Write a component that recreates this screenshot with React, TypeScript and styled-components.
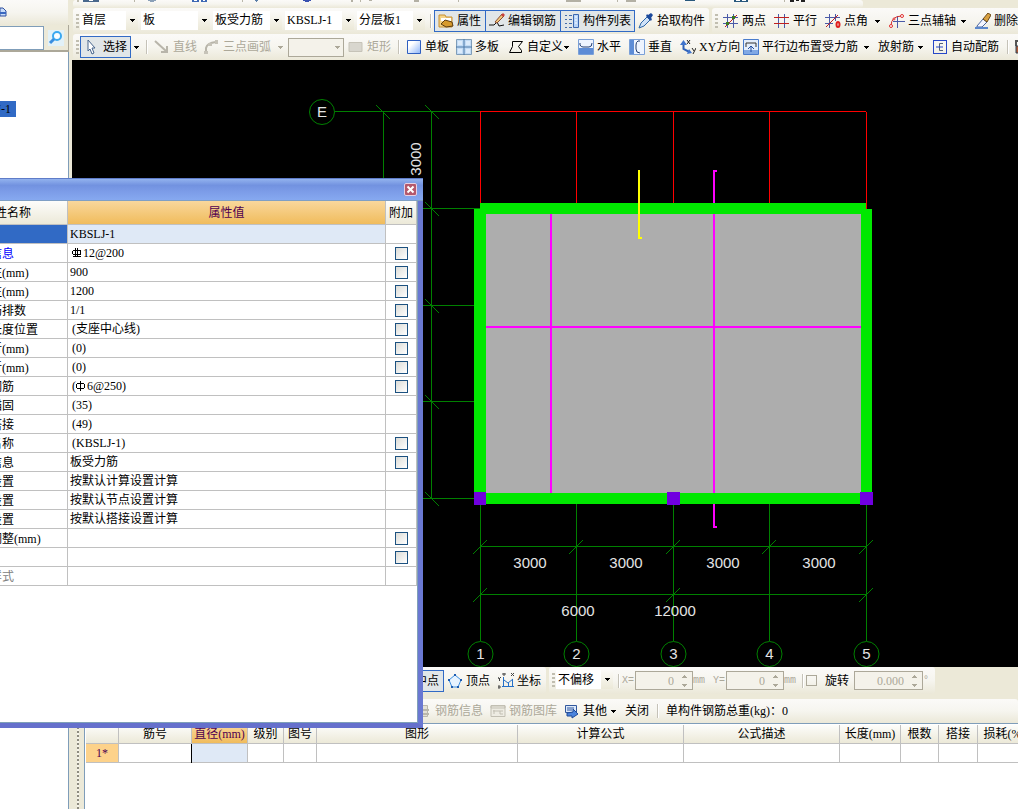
import React from "react";
import styled, { createGlobalStyle, css } from "styled-components";

const GlobalStyle = createGlobalStyle`
  * { box-sizing: border-box; }
  body { margin: 0; overflow: hidden; background: #ece9d8; }
  body, button, input, select, table {
    font-family: "Liberation Serif", "Noto Sans CJK SC", serif;
    font-size: 12px;
    line-height: 16px;
    color: #000;
  }
`;

const line = "#c0c0c0";
const blueLine = "#7f9db9";
const barFill = "linear-gradient(#fbfaf8, #f6f5ef 50%, #ebe8d8)";

/* ---------- frame ---------- */

const Window = styled.div`
  display: flex;
  min-height: 100vh;
  position: relative;
  overflow: hidden;
`;

const Sidebar = styled.aside`
  flex: none;
  width: 69px;
  display: flex;
  flex-direction: column;
`;

const SideTools = styled.div`
  height: 25px;
  margin-right: 1px;
  background: ${barFill};
  display: flex;
  align-items: center;
`;

const SearchRow = styled.div`
  display: flex;
  height: 27px;
  padding-top: 1px;
  border-bottom: 2px solid #aca899;
  border-right: 1px solid #aca899;
`;

const SearchInput = styled.input`
  width: 44px;
  height: 24px;
  border: 1px solid ${blueLine};
  border-left: 0;
  background: #fff;
`;

const SearchButton = styled.button`
  flex: 1;
  border: 0;
  padding: 0 0 0 4px;
  background: #ece9d8;
  display: flex;
  align-items: center;
  svg { background: #e2f1f8; }
`;

const Tree = styled.div`
  flex: 1;
  background: #fff;
  border-right: 1px solid ${blueLine};
  padding-top: 49px;
`;

const TreeItem = styled.div`
  width: 16px;
  height: 16px;
  overflow: hidden;
  display: flex;
  justify-content: flex-end;
  padding-right: 5px;
  white-space: nowrap;
  background: #316ac5;
`;

const Main = styled.main`
  flex: 1;
  min-width: 0;
  display: flex;
  flex-direction: column;
`;

const Workspace = styled.section`
  flex: 1;
  display: flex;
  flex-direction: column;
  padding-left: 3px;
`;

const Canvas = styled.div`
  flex: 1;
  background: #000;
  overflow: hidden;
  display: flex;
  svg { display: block; flex: none; }
`;

/* ---------- toolbars ---------- */

const ToolRow = styled.div<{ $h?: number; $bottom?: number }>`
  display: flex;
  gap: 3px;
  height: ${(p) => p.$h ?? 26}px;
  padding-bottom: ${(p) => p.$bottom ?? 0}px;
  padding-left: 1px;
  overflow: hidden;
`;

const Bar = styled.div<{ $grow?: boolean; $lead?: number }>`
  flex: ${(p) => (p.$grow ? "1 0 auto" : "none")};
  display: flex;
  align-items: center;
  padding-left: ${(p) => p.$lead ?? 0}px;
  background: ${barFill};
  border-radius: 3px;
`;

const Grip = styled.span`
  flex: none;
  width: 3px;
  height: 15px;
  margin: 0 1px 0 3px;
  background: repeating-linear-gradient(#c1beb0 0 2px, transparent 2px 4px);
`;

const Separator = styled.span`
  flex: none;
  width: 2px;
  height: 14px;
  margin: 0 2px;
  background: linear-gradient(90deg, #c5c2b8 50%, #fff 50%);
`;

const Tool = styled.button<{ $w: number; $on?: boolean }>`
  flex: none;
  width: ${(p) => p.$w}px;
  height: 22px;
  display: flex;
  align-items: center;
  gap: 3px;
  padding: 0 3px;
  border: 1px solid transparent;
  background: none;
  white-space: nowrap;
  svg { flex: none; }
  &:disabled { color: #aca899; }
  ${(p) =>
    p.$on &&
    css`
      border-color: #316ac5;
      background: #e1e6e8;
      & + & { margin-left: -1px; }
    `}
`;

const CaretButton = styled.button`
  flex: none;
  width: 13px;
  height: 22px;
  display: flex;
  align-items: center;
  padding: 0 0 0 3px;
  border: 0;
  background: none;
  color: #000;
  &:disabled { color: #aca899; }
`;

const Pick = styled.span<{ $w: number; $off?: boolean }>`
  flex: none;
  display: grid;
  grid-template-columns: 1fr 12px;
  width: ${(p) => p.$w}px;
  height: 19px;
  margin: ${(p) => (p.$off ? "0" : "0 3px 2px 0")};
  background: ${(p) => (p.$off ? "#f4f2ea" : "#fff")};
  border: ${(p) => (p.$off ? "1px solid #aca899" : "0")};
  color: ${(p) => (p.$off ? "#aca899" : "#000")};
  > select {
    grid-area: 1 / 1 / 2 / 3;
    appearance: none;
    border: 0;
    padding: 0 0 0 2px;
    background: none;
    width: 100%;
  }
  > span {
    grid-area: 1 / 2 / 2 / 3;
    pointer-events: none;
    display: flex;
    align-items: center;
    justify-content: center;
    background: ${(p) => (p.$off ? "none" : "linear-gradient(#fbfaf7, #ece9d8)")};
  }
`;

const Caret = ({ up }: { up?: boolean }) => (
  <svg width="5" height="3" viewBox="0 0 5 3" shapeRendering="crispEdges">
    <path d={up ? "M2 0h1v1h1v1h1v1H0V2h1V1h1z" : "M0 0h5v1H4v1H3v1H2V2H1V1H0z"} fill="currentColor" />
  </svg>
);

const Drop = ({ value, w, label, off }: { value: string; w: number; label: string; off?: boolean }) => (
  <Pick $w={w} $off={off}>
    <select aria-label={label} disabled={off} defaultValue={value}>
      <option>{value}</option>
    </select>
    <span><Caret /></span>
  </Pick>
);

const Field = styled.label<{ $pad?: number }>`
  flex: none;
  display: flex;
  align-items: center;
  color: #aca899;
  gap: 1px;
  padding-left: ${(p) => p.$pad ?? 0}px;
`;

const Label = styled.span<{ $w?: number }>`
  flex: none;
  width: ${(p) => p.$w ?? 13}px;
  white-space: nowrap;
  color: #000;
`;

const Unit = styled.span<{ $w?: number }>`
  flex: none;
  width: ${(p) => p.$w ?? 12}px;
  font-family: "Liberation Mono", monospace;
  font-size: 10px;
  white-space: nowrap;
  color: #aca899;
`;

const NumberBox = styled.span<{ $w: number }>`
  flex: none;
  display: flex;
  align-items: center;
  width: ${(p) => p.$w}px;
  height: 19px;
  border: 1px solid #aca899;
  background: #f4f2ea;
  color: #aca899;
  input {
    flex: 1;
    min-width: 0;
    border: 0;
    padding: 0 8px 0 0;
    background: none;
    text-align: right;
    color: #aca899;
  }
`;

const Arrows = styled.span`
  flex: none;
  width: 10px;
  display: flex;
  flex-direction: column;
  gap: 6px;
`;

const Spin = ({ value, w, label }: { value: string; w: number; label: string }) => (
  <NumberBox $w={w}>
    <input aria-label={label} defaultValue={value} disabled />
    <Arrows><Caret up /><Caret /></Arrows>
  </NumberBox>
);

const TurnCheck = styled.input`
  appearance: none;
  width: 11px;
  height: 11px;
  margin: 0 7px 0 0;
  border: 1px solid #aca899;
`;

/* ---------- icons ---------- */

const glyphs: Record<string, React.ReactNode> = {
  pointer: <path d="M4 1l7 8H8l2 5-2 1-2-5-2 2z" fill="#fff" stroke="#46648c" />,
  line: <path d="M1 2l11 10M13 7v6H7" fill="none" stroke="#b8b5aa" strokeWidth="2" />,
  arc: <><path d="M2 14V9Q3 4 12 3" fill="none" stroke="#b8b5aa" strokeWidth="2" /><path d="M0 12h4v3H0zM4 4h4v3H4zM11 1h3v4h-3z" fill="#c6c3b8" /></>,
  rect: <path d="M1 3.5h13v9H1z" fill="#d8d6ce" stroke="#c6c3b8" />,
  slab: <path d="M1.500 1.500h13v13h-13z" fill="url(#slabFill)" stroke="#2f5fc0" />,
  slabs: <><path d="M.5.5h15v15H.5z" fill="#c2dbf5" stroke="#7f9db9" /><path d="M8 0v16M0 8h16" stroke="#4a78a8" /><path d="M2 2h4v4H2zM10 2h4v4h-4zM2 10h4v4H2zM10 10h4v4h-4z" fill="#dcebfb" /></>,
  poly: <path d="M4.500 2.500h10l-4 5 3 4M1.500 13.500h12v-2M1.500 13.500l3-6v-5" fill="none" stroke="#000" />,
  horiz: <><path d="M.5.5h15v15H.5z" fill="#eef4ff" stroke="#7aa0d8" /><path d="M1 9h14v6H1z" fill="#5d8cd6" /><path d="M2 4v2q1 2 3 2h6q3 0 3-4" fill="none" stroke="#223d70" /></>,
  vert: <><path d="M.5.5h15v15H.5z" fill="#eef4ff" stroke="#7aa0d8" /><path d="M1 1h4v14H1z" fill="#5d8cd6" /><path d="M11 2H9Q7 3 7 6v4q0 4 4 4" fill="none" stroke="#223d70" /></>,
  xy: <><path d="M3.500 4v6l6 3" fill="none" stroke="#2f62b8" strokeWidth="2" /><path d="M3.500 1L7 6H0zM12 14l-5 1 2-5z" fill="#3f74cc" /><path d="M7 1l3 4M10 1L7 5M12 9l2 3M16 9l-3 6" fill="none" stroke="#222" /></>,
  edge: <><path d="M.5.5h15v15H.5z" fill="#e4eefc" stroke="#4a7ccc" /><path d="M1 11h14v4H1z" fill="#80a8e4" /><path d="M3 8V4h10v4" fill="none" stroke="#333" /><path d="M8 7v6M5 10l3-3 3 3" fill="none" stroke="#234ea0" /></>,
  auto: <><path d="M1 1.500h14M1 14.500h14M1.500 1v14M14.500 1v14" stroke="#2747c8" /><path d="M11 4.500H7.500v7H11" stroke="#53627a" fill="none" /><path d="M4 8h7" stroke="#2747c8" /></>,
  attr: <><path d="M1 2h6l1 2h6v10H1z" fill="#f4d488" stroke="#c89030" /><path d="M3 5h10v3H3z" fill="#fff" /><path d="M3 11l4-4 7 2 1 4-7 1z" fill="#d69a2c" stroke="#5b3c12" /></>,
  edit: <><path d="M0 12h5l3-3 2 4 5-1" fill="none" stroke="#111" /><path d="M6 9l7-8 2 2-7 7z" fill="#eec87c" stroke="#8b4a30" /><path d="M12 2l2-2 2 2-2 2z" fill="#c8403a" /></>,
  list: <><path d="M9.500 1.500h5v13h-5z" fill="#b9d5f8" stroke="#3c68b0" /><path d="M11 4h2M11 7h2M11 10h2" stroke="#fff" /><path d="M1 2.500h2M5 2.500h3M1 6.500h2M5 6.500h3M1 10.500h2M5 10.500h3M1 14.500h2M5 14.500h3" stroke="#446caa" /></>,
  dropper: <><path d="M1 15l2-5 6-6 3 3-6 6z" fill="#cfe2f8" stroke="#2c66a8" /><path d="M8 3l5 5 1-2-1-1 2-3-2-2-3 2-1-1z" fill="#1d4a9c" /></>,
  twoPoint: <><path d="M4.500 1v14M10.500 1v14M0 4.500h15M0 10.500h15" stroke="#4a5aa8" /><path d="M2 14L14 2" stroke="#c02020" /><path d="M3 9h3v3H3zM9 3h3v3H9z" fill="#3a7a20" /></>,
  parallel: <><path d="M4.500 1v14M10.500 1v14" stroke="#4a5aa8" /><path d="M0 4.500h15M0 10.500h15" stroke="#c02020" /></>,
  angle: <><path d="M4.500 1v14M10.500 1v7M0 4.500h15M0 10.500h8" stroke="#4a5aa8" /><path d="M1 14L13 2" stroke="#c02020" /><ellipse cx="13" cy="11.500" rx="1.500" ry="2.500" fill="none" stroke="#e02020" strokeWidth="2" /></>,
  arcAxis: <><path d="M8.500 3v12M4 8.500h12" stroke="#4a5aa8" /><path d="M2 13Q2 3 13 3" fill="none" stroke="#d03030" /><circle cx="2" cy="13" r="1.500" fill="#fff" stroke="#e03030" /><circle cx="5" cy="6" r="1" fill="#fff" stroke="#e03030" /><circle cx="13" cy="3" r="1.500" fill="#fff" stroke="#e03030" /></>,
  erase: <><path d="M2 13l6-7 4 3-5 5H2z" fill="#f4f6ff" stroke="#4a66a0" /><path d="M8 6l5-6 3 2-4 7z" fill="#d8a040" stroke="#6b4a18" /><path d="M0 14h13v2H0z" fill="#5c88cc" /></>,
  mid: <path d="M2 8h12M8 2v12" stroke="#2a6ab8" />,
  vertex: <><path d="M8 2l6 5-3 7H5L2 7z" fill="#e6f3ff" stroke="#3d8ee0" /><path d="M7 1h2v2H7zM1 6h2v2H1zM13 6h2v2h-2zM4 13h2v2H4zM10 13h2v2h-2z" fill="#1c5bb0" /></>,
  coord: <><path d="M5.500 4v10M4 13.500h12M6 7l4 3 5-4M10.500 10v4M14.500 6v8" fill="none" stroke="#2470c8" /><path d="M0 4l1 2 2-2M1.500 6v2M5 0h2v2H5zM13 0l3 3M16 0l-3 3M0 13h2v2H0z" fill="none" stroke="#444" /></>,
  info: <><path d="M2.500 2.500h9v11h-9z" fill="#e4e1d6" stroke="#bab7ab" /><path d="M5 6h8v2H5zM5 10h8v2H5z" fill="#bab7ab" /></>,
  library: <><path d="M1 2.500h14v11H1z" fill="#eeece3" stroke="#c2bfb3" /><path d="M1 3h14v2H1zM3 8h10M4 7v4M10 8v3h3" fill="none" stroke="#c2bfb3" /></>,
  other: <><path d="M1.500 2.500h11v7h-11z" fill="#dce9fb" stroke="#31579c" /><path d="M3 5h7M3 7h5" stroke="#31579c" /><path d="M3 10v3h5v2l6-4-5-5v3z" fill="#4b84dc" stroke="#1f4a98" /></>,
  find: <><circle cx="9" cy="6" r="4" fill="#fafdff" stroke="#3aa8f0" strokeWidth="2" /><path d="M6 9l-4 4" stroke="#3a8ee0" strokeWidth="3" /></>,
  print: <><path d="M0 3h3l3 3v5H0z" fill="#c8dcf8" stroke="#3050a0" /><path d="M0 7h6v2H0z" fill="#3a68c0" /></>,
  calc: <><path d="M1 7V2h9v3" fill="none" stroke="#555" strokeWidth="2" /><path d="M1 7h8v7H1z" fill="#b05a38" stroke="#345" /><path d="M3 9h2v2H3zM6 11h2v2H6z" fill="#68b8e8" /></>,
};

const Icon = ({ name }: { name: string }) => (
  <svg width="16" height="16" viewBox="0 0 16 16" aria-hidden="true">{glyphs[name]}</svg>
);

type ToolProps = { icon?: string; text: string; w: number; on?: boolean; off?: boolean };
const T = ({ icon, text, w, on, off }: ToolProps) => (
  <Tool $w={w} $on={on} disabled={off}>
    {icon && <Icon name={icon} />}
    {text}
  </Tool>
);

const More = ({ off }: { off?: boolean }) => (
  <CaretButton aria-label="more" disabled={off}><Caret /></CaretButton>
);

/* Lower edge of the icon strip that scrolls out of the window's top. */
const StripEdge = () => (
  <svg width="790" height="8" viewBox="73 0 790 8" shapeRendering="crispEdges" aria-hidden="true">
    <path d="M77 0h2v2h-2z" fill="#c1beb0" />
    <path d="M83 0h16v2H83z" fill="#49688c" />
    <path d="M89 0h4v1h-4z" fill="#fff" />
    <path d="M134 0h1v2h-1zM242 0h1v2h-1zM360 0h1v2h-1zM458 0h1v2h-1zM617 0h1v2h-1zM784 0h1v2h-1z" fill="#b9b6a8" />
    <path d="M148 0h8v1h-2v1h-4V1h-2z" fill="#8aa0b8" />
    <path d="M192 0h7v2h-7zM201 0h6v2h-6z" fill="#3d68b4" />
    <path d="M194 0h3v1h-3zM203 0h2v1h-2z" fill="#fff" />
    <path d="M255 0h3v1h-1v1h-1V1h-1z" fill="#5b7fa8" />
    <path d="M303 0h8v1h-2v1h-4V1h-2z" fill="#3850b0" />
    <path d="M351 0h2v2h-2zM369 0h3v1h-3zM414 0h5v2h-5zM566 0h15v2h-15zM626 0h10v2h-10z" fill="#b3b0a4" />
    <path d="M685 0h10v1h-10zM734 0h14v2h-14z" fill="#28587c" />
    <path d="M736 0h4v1h-4zM742 0h4v1h-4z" fill="#fff" />
    <path d="M790 0h4v2h-4zM796 0h3v1h-3zM801 0h4v2h-4z" fill="#222" />
  </svg>
);

/* ---------- drawing ---------- */

const axes = [480, 576, 673, 769, 866];
const levels = [208, 305, 401, 498];

const Plan = () => (
  <svg width="946" height="607" viewBox="72 60 946 607" fontFamily="Liberation Sans, sans-serif" fontSize="15" textAnchor="middle">
    <defs>
      <linearGradient id="slabFill" x1="0" y1="0" x2="1" y2="1">
        <stop offset="0.3" stopColor="#fff" />
        <stop offset="1" stopColor="#8cb4f8" />
      </linearGradient>
    </defs>
    <g stroke="#008000" fill="none" shapeRendering="crispEdges">
      <path d="M335 111.500H480M383.500 111V208M431.500 111V498" />
      {levels.map((y) => <path key={y} d={`M383 ${y}.5H480`} />)}
      <path d="M480 546.500H867M480 594.500H867" />
      {axes.map((x) => <path key={x} d={`M${x}.5 504V641`} />)}
    </g>
    <g stroke="#008000" fill="none">
      <path d="M376 105l14 14M425 105l14 14" />
      {levels.map((y) => <path key={y} d={`M425 ${y - 6}l14 14`} />)}
      {axes.map((x) => <path key={x} d={`M${x - 7} 554l14 -14`} />)}
      {[480, 673, 866].map((x) => <path key={x} d={`M${x - 7} 602l14 -14`} />)}
      <circle cx="322" cy="112" r="12.500" />
      {axes.map((x) => <circle key={x} cx={x + 0.5} cy="654" r="12.500" />)}
    </g>
    <g stroke="#f00" fill="none" shapeRendering="crispEdges">
      <path d="M480 111.500H866" />
      {axes.map((x) => <path key={x} d={`M${x}.5 112V209`} />)}
    </g>
    <g shapeRendering="crispEdges">
      <path d="M486 214H861V493H486z" fill="#adadad" />
      <path d="M486 327H861M551 214V493M714 170V527M713 170.500h4M713 526.500h4" stroke="#f0f" strokeWidth="2" fill="none" />
      <path d="M480 203H866V209H872V504H474V209H480zM486 214V493H861V214z" fill="#00e800" fillRule="evenodd" />
      <path d="M639 170V238M638 237.500h4" stroke="#ff0" strokeWidth="2" fill="none" />
      <path d="M474 492h12v13h-12zM667 492h13v13h-13zM860 492h13v13h-13z" fill="#7000e0" />
    </g>
    <g fill="#e4e4e4">
      <text x="322" y="117">E</text>
      <text transform="translate(421 159) rotate(-90)">3000</text>
      {[530, 626, 723, 819].map((x) => <text key={x} x={x} y="568">3000</text>)}
      <text x="578" y="616">6000</text>
      <text x="675" y="616">12000</text>
      {axes.map((x, i) => <text key={x} x={x + 0.5} y="659">{i + 1}</text>)}
    </g>
  </svg>
);

/* ---------- property window ---------- */

const Dialog = styled.section`
  position: absolute;
  left: -58px;
  top: 178px;
  width: 481px;
  height: 550px;
  display: flex;
  flex-direction: column;
  border: solid #6c7fd8;
  border-width: 0 5px 5px;
  border-right-color: #6a78d2;
  border-bottom-color: #6570cc;
  background: #fff;
  box-shadow: inset -1px -1px 0 #7fa0b8;
`;

const TitleBar = styled.header`
  flex: none;
  height: 23px;
  margin-right: -5px;
  padding-right: 6px;
  display: flex;
  align-items: center;
  justify-content: flex-end;
  border-top: 1px solid #5f7cc8;
  border-bottom: 1px solid #7f9fc4;
  background: linear-gradient(#92b2ee, #7292e0 30%, #7c9ce8 60%, #86a9f0);
`;

const CloseButton = styled.button`
  width: 13px;
  height: 13px;
  padding: 0;
  border: 1px solid #e6d0e4;
  border-radius: 2px;
  background: #b4586c;
  display: flex;
  align-items: center;
  justify-content: center;
`;

const PropTable = styled.table`
  flex: none;
  width: 470px;
  border-collapse: separate;
  border-spacing: 0;
  table-layout: fixed;
  th, td {
    height: 19px;
    padding: 0 2px;
    border-right: 1px solid ${line};
    border-bottom: 1px solid ${line};
    white-space: nowrap;
    overflow: hidden;
    text-align: left;
    font-weight: 400;
    line-height: 16px;
  }
  thead th {
    height: 24px;
    text-align: center;
    background: linear-gradient(#fdfdfb, #ece9d8);
  }
`;

const ValueHead = styled.th`
  && { background: linear-gradient(#f9d79c, #f0bc5c); color: #500050; }
`;

const NameCell = styled.th<{ $tone?: string }>`
  && { padding-left: 19px; padding-top: 1px; }
  color: ${(p) => (p.$tone === "blue" ? "#00f" : p.$tone === "gray" ? "#808080" : p.$tone === "pick" ? "#fff" : "#000")};
  background: ${(p) => (p.$tone === "pick" ? "#316ac5" : "#fff")};
`;

const ValueCell = styled.td<{ $picked?: boolean; $inset?: boolean }>`
  && { padding-left: ${(p) => (p.$inset ? 4 : 2)}px; }
  background: ${(p) => (p.$picked ? "#dfe9f6" : "#fff")};
  svg { vertical-align: -1px; margin-right: 1px; }
`;

const AttachBox = styled.input`
  appearance: none;
  display: block;
  width: 13px;
  height: 13px;
  margin: 0 0 0 7px;
  border: 1px solid #1c5180;
  background: linear-gradient(135deg, #dcdcd7, #fff);
`;

const Grade = ({ double }: { double?: boolean }) => (
  <svg width="10" height="10" viewBox="0 0 10 10" fill="none" stroke="#000" shapeRendering="crispEdges" aria-label="Φ">
    {double ? <path d="M1 2.500h8M.5 3v3M8.500 3v3M1 6.500h8M3.500 0v9M5.500 0v9M1 8.500h8" /> : <path d="M1 2.500h7M.5 3v4M8.500 3v4M1 7.500h7M4.500 0v10" />}
  </svg>
);

type Prop = { name: string; value?: React.ReactNode; box?: boolean; tone?: string; inset?: boolean };
const props: Prop[] = [
  { name: "名称", value: "KBSLJ-1", tone: "pick" },
  { name: "钢筋信息", value: <><Grade double />12@200</>, box: true, tone: "blue", inset: true },
  { name: "左标注(mm)", value: "900", box: true },
  { name: "右标注(mm)", value: "1200", box: true },
  { name: "马凳筋排数", value: "1/1", box: true },
  { name: "标注长度位置", value: "(支座中心线)", box: true, inset: true },
  { name: "左弯折(mm)", value: "(0)", box: true, inset: true },
  { name: "右弯折(mm)", value: "(0)", box: true, inset: true },
  { name: "分布钢筋", value: <>(<Grade />6@250)</>, box: true, inset: true },
  { name: "钢筋锚固", value: "(35)", inset: true },
  { name: "钢筋搭接", value: "(49)", inset: true },
  { name: "归类名称", value: "(KBSLJ-1)", box: true, inset: true },
  { name: "汇总信息", value: "板受力筋", box: true },
  { name: "计算设置", value: "按默认计算设置计算" },
  { name: "节点设置", value: "按默认节点设置计算" },
  { name: "搭接设置", value: "按默认搭接设置计算" },
  { name: "长度调整(mm)", box: true },
  { name: "备注", box: true },
  { name: "显示样式", tone: "gray" },
];

const PropertyWindow = () => (
  <Dialog role="dialog" aria-label="属性">
    <TitleBar>
      <CloseButton aria-label="关闭">
        <svg width="9" height="9" viewBox="0 0 9 9"><path d="M1.500 1.500l6 6M7.500 1.500l-6 6" stroke="#fff" strokeWidth="2" /></svg>
      </CloseButton>
    </TitleBar>
    <PropTable>
      <colgroup>
        <col style={{ width: 121 }} />
        <col />
        <col style={{ width: 31 }} />
      </colgroup>
      <thead>
        <tr><th>属性名称</th><ValueHead>属性值</ValueHead><th>附加</th></tr>
      </thead>
      <tbody>
        {props.map((p) => (
          <tr key={p.name}>
            <NameCell scope="row" $tone={p.tone}>{p.name}</NameCell>
            <ValueCell $picked={p.tone === "pick"} $inset={p.inset}>{p.value}</ValueCell>
            <td>{p.box && <AttachBox type="checkbox" aria-label={p.name} />}</td>
          </tr>
        ))}
      </tbody>
    </PropTable>
  </Dialog>
);

/* ---------- rebar grid ---------- */

const GridArea = styled.section`
  flex: none;
  display: flex;
  height: 86px;
`;

const Splitter = styled.div`
  flex: none;
  width: 16px;
  padding-left: 8px;
  border-right: 1px solid ${blueLine};
  &::before {
    content: "";
    display: block;
    width: 2px;
    height: 100%;
    background: repeating-linear-gradient(#8e8b80 0 2px, #f6f4ea 2px 4px);
  }
`;

const GridPanel = styled.div`
  flex: 1;
  min-width: 0;
  overflow: hidden;
  background: #fff;
  border-top: 1px solid ${blueLine};
  padding: 1px 0 0 1px;
`;

const RebarTable = styled.table`
  width: 946px;
  table-layout: fixed;
  border-collapse: separate;
  border-spacing: 0;
  th, td {
    height: 19px;
    padding: 0;
    border-right: 1px solid ${line};
    border-bottom: 1px solid ${line};
    font-weight: 400;
    text-align: center;
    line-height: 16px;
    white-space: nowrap;
  }
  thead th { background: linear-gradient(#fdfdfb, #ece9d8); }
`;

const ActiveHead = styled.th`
  && { background: linear-gradient(#f9d79c, #f0bc5c); color: #500050; }
`;
const RowHead = styled.th`
  background: #fdd28a;
  color: #500050;
`;
const ActiveCell = styled.td`
  background: #dfe9f6;
  box-shadow: -1px 0 0 #000;
`;

const columns: [string, number][] = [
  ["", 33], ["筋号", 73], ["直径(mm)", 56], ["级别", 36], ["图号", 33], ["图形", 201],
  ["计算公式", 166], ["公式描述", 156], ["长度(mm)", 61], ["根数", 38], ["搭接", 39], ["损耗(%)", 54],
];

const RebarGrid = () => (
  <RebarTable>
    <colgroup>{columns.map(([n, w]) => <col key={n} style={{ width: w }} />)}</colgroup>
    <thead>
      <tr>{columns.map(([n], i) => (i === 2 ? <ActiveHead key={n}>{n}</ActiveHead> : <th key={n}>{n}</th>))}</tr>
    </thead>
    <tbody>
      <tr>
        {columns.map(([n], i) =>
          i === 0 ? <RowHead key={n}>1*</RowHead> : i === 2 ? <ActiveCell key={n} /> : <td key={n} />
        )}
      </tr>
    </tbody>
  </RebarTable>
);

/* ---------- page ---------- */

export default function App() {
  return (
    <Window>
      <GlobalStyle />
      <Sidebar>
        <SideTools><Icon name="print" /></SideTools>
        <SearchRow>
          <SearchInput aria-label="搜索" />
          <SearchButton aria-label="查找"><Icon name="find" /></SearchButton>
        </SearchRow>
        <Tree><TreeItem>KBSLJ-1</TreeItem></Tree>
      </Sidebar>
      <Main>
        <Workspace>
          <ToolRow $h={8}><Bar><StripEdge /></Bar></ToolRow>
          <ToolRow>
            <Bar>
              <Grip />
              <Drop label="楼层" value="首层" w={58} />
              <Drop label="构件类别" value="板" w={69} />
              <Drop label="构件类型" value="板受力筋" w={69} />
              <Drop label="构件" value="KBSLJ-1" w={69} />
              <Drop label="分层" value="分层板1" w={68} />
              <Separator />
              <T icon="attr" text="属性" w={52} on />
              <T icon="edit" text="编辑钢筋" w={76} on />
              <T icon="list" text="构件列表" w={75} on />
              <T icon="dropper" text="拾取构件" w={75} />
            </Bar>
            <Bar $grow>
              <Grip />
              <T icon="twoPoint" text="两点" w={52} />
              <T icon="parallel" text="平行" w={52} />
              <T icon="angle" text="点角" w={51} />
              <More />
              <T icon="arcAxis" text="三点辅轴" w={73} />
              <More />
              <T icon="erase" text="删除" w={50} />
            </Bar>
          </ToolRow>
          <ToolRow>
            <Bar $grow>
              <Grip />
              <T icon="pointer" text="选择" w={51} on />
              <More />
              <Separator />
              <T icon="line" text="直线" w={51} off />
              <T icon="arc" text="三点画弧" w={75} off />
              <More off />
              <Drop label="画弧方式" value="" w={56} off />
              <T icon="rect" text="矩形" w={52} off />
              <Separator />
              <T icon="slab" text="单板" w={51} />
              <T icon="slabs" text="多板" w={53} />
              <T icon="poly" text="自定义" w={57} />
              <More />
              <T icon="horiz" text="水平" w={52} />
              <T icon="vert" text="垂直" w={52} />
              <T icon="xy" text="XY方向" w={64} />
              <T icon="edge" text="平行边布置受力筋" w={122} />
              <More />
              <T text="放射筋" w={41} />
              <More />
              <T icon="auto" text="自动配筋" w={77} />
              <Separator />
              <T icon="calc" text="" w={24} />
            </Bar>
          </ToolRow>
          <Canvas><Plan /></Canvas>
          <ToolRow $h={32} $bottom={5}>
            <Bar $lead={319}>
              <T icon="mid" text="中点" w={52} on />
              <T icon="vertex" text="顶点" w={52} />
              <T icon="coord" text="坐标" w={52} />
            </Bar>
            <Bar>
              <Grip />
              <Drop label="偏移方式" value="不偏移" w={57} />
              <Separator />
              <Field><Unit>X=</Unit><Spin label="X" value="0" w={58} /></Field>
              <Unit>mm</Unit>
              <Field $pad={8}><Unit>Y=</Unit><Spin label="Y" value="0" w={58} /></Field>
              <Unit $w={16}>mm</Unit>
              <Separator />
              <Field><TurnCheck type="checkbox" /><Label $w={29}>旋转</Label></Field>
              <Spin label="角度" value="0.000" w={69} />
              <Unit>°</Unit>
            </Bar>
          </ToolRow>
          <ToolRow $h={24}>
            <Bar $grow $lead={339}>
              <T icon="info" text="钢筋信息" w={75} off />
              <T icon="library" text="钢筋图库" w={75} off />
              <T icon="other" text="其他" w={48} />
              <More />
              <T text="关闭" w={34} />
              <Separator />
              <Field $pad={5}><Label $w={140}>单构件钢筋总重(kg)：0</Label></Field>
            </Bar>
          </ToolRow>
        </Workspace>
        <GridArea>
          <Splitter />
          <GridPanel><RebarGrid /></GridPanel>
        </GridArea>
      </Main>
      <PropertyWindow />
    </Window>
  );
}
